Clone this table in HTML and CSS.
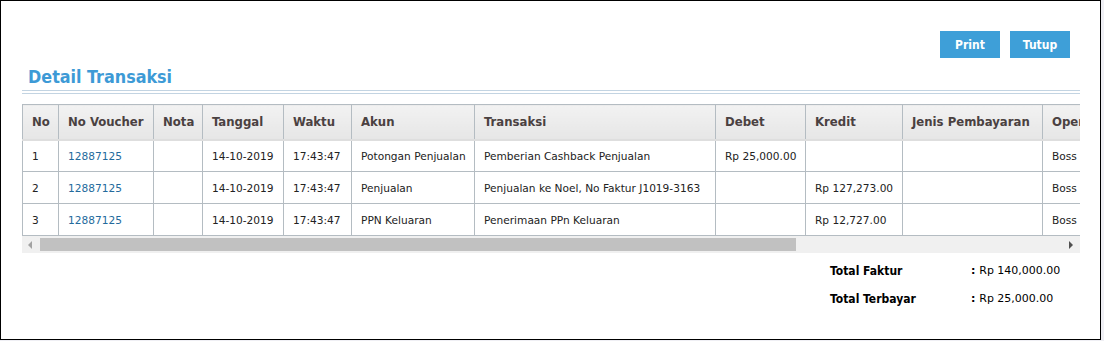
FILE: index.html
```html
<!DOCTYPE html>
<html lang="id">
<head>
    <meta charset="UTF-8">
    <meta name="viewport" content="width=device-width, initial-scale=1.0">
    <title>Detail Transaksi</title>
    <link rel="stylesheet" href="styles.css">
</head>
<body>
    <div class="dialog">
        <div class="toolbar">
            <button class="btn" type="button">Print</button>
            <button class="btn" type="button">Tutup</button>
        </div>

        <h2 class="title">Detail Transaksi</h2>
        <div class="rule"></div>

        <div class="grid-wrap">
            <table class="detail">
                <colgroup>
                    <col style="width:36px">
                    <col style="width:95px">
                    <col style="width:49px">
                    <col style="width:81px">
                    <col style="width:68px">
                    <col style="width:123px">
                    <col style="width:241px">
                    <col style="width:90px">
                    <col style="width:97px">
                    <col style="width:140px">
                    <col style="width:100px">
                </colgroup>
                <thead>
                    <tr>
                        <th>No</th>
                        <th>No Voucher</th>
                        <th>Nota</th>
                        <th>Tanggal</th>
                        <th>Waktu</th>
                        <th>Akun</th>
                        <th>Transaksi</th>
                        <th>Debet</th>
                        <th>Kredit</th>
                        <th>Jenis Pembayaran</th>
                        <th>Operator</th>
                    </tr>
                </thead>
                <tbody>
                    <tr>
                        <td>1</td>
                        <td><a href="#">12887125</a></td>
                        <td></td>
                        <td>14-10-2019</td>
                        <td>17:43:47</td>
                        <td>Potongan Penjualan</td>
                        <td>Pemberian Cashback Penjualan</td>
                        <td>Rp 25,000.00</td>
                        <td></td>
                        <td></td>
                        <td>Boss</td>
                    </tr>
                    <tr>
                        <td>2</td>
                        <td><a href="#">12887125</a></td>
                        <td></td>
                        <td>14-10-2019</td>
                        <td>17:43:47</td>
                        <td>Penjualan</td>
                        <td>Penjualan ke Noel, No Faktur J1019-3163</td>
                        <td></td>
                        <td>Rp 127,273.00</td>
                        <td></td>
                        <td>Boss</td>
                    </tr>
                    <tr>
                        <td>3</td>
                        <td><a href="#">12887125</a></td>
                        <td></td>
                        <td>14-10-2019</td>
                        <td>17:43:47</td>
                        <td>PPN Keluaran</td>
                        <td>Penerimaan PPn Keluaran</td>
                        <td></td>
                        <td>Rp 12,727.00</td>
                        <td></td>
                        <td>Boss</td>
                    </tr>
                </tbody>
            </table>
            <div class="hscroll">
                <span class="arrow arrow-left"></span>
                <span class="thumb"></span>
                <span class="arrow arrow-right"></span>
            </div>
        </div>

        <div class="totals">
            <span class="label">Total Faktur</span>
            <span class="value">: <span>Rp 140,000.00</span></span>
            <span class="label">Total Terbayar</span>
            <span class="value">: <span>Rp 25,000.00</span></span>
        </div>
    </div>
</body>
</html>
```

FILE: styles.css
```css
* {
    margin: 0;
    padding: 0;
    box-sizing: border-box;
}

body {
    font-family: 'DejaVu Sans', Verdana, sans-serif;
    font-size: 10.6px;
    background-color: #efeff4;
    color: #222;
}

.dialog {
    width: 1101px;
    height: 340px;
    background-color: #fff;
    border: 1px solid #000;
    padding: 30px 20px 0 21px;
}

.toolbar {
    display: flex;
    justify-content: flex-end;
    gap: 10px;
    padding-right: 10px;
}

.btn {
    width: 60px;
    height: 27px;
    border: none;
    background-color: #3e9fd8;
    color: #fff;
    font-family: 'DejaVu Sans Condensed', 'DejaVu Sans', sans-serif;
    font-weight: bold;
    font-size: 12px;
    cursor: pointer;
}

.title {
    margin-top: 9px;
    padding-left: 6px;
    font-family: 'DejaVu Sans Condensed', 'DejaVu Sans', sans-serif;
    font-size: 17.8px;
    line-height: 20px;
    color: #3d9ad6;
}

.rule {
    height: 4px;
    margin-top: 3px;
    border-top: 1px solid #c3d4e2;
    border-bottom: 1px solid #c3d4e2;
}

.grid-wrap {
    margin-top: 10px;
    overflow: hidden;
}

table.detail {
    width: 1120px;
    table-layout: fixed;
    border-collapse: collapse;
}

.detail th, .detail td {
    border: 1px solid #b4bcc2;
    padding: 0 9px;
    text-align: left;
    white-space: nowrap;
    overflow: hidden;
}

.detail th {
    height: 35px;
    background: linear-gradient(#f2f2f2, #e6e6e6);
    border-bottom: 2px solid #dedede;
    font-family: 'DejaVu Sans Condensed', 'DejaVu Sans', sans-serif;
    font-size: 13px;
    color: #4a4141;
}

.detail td {
    height: 32px;
    padding-top: 1px;
}

.detail td a {
    color: #236a9c;
    text-decoration: none;
}

/* horizontal scroller under the grid */
.hscroll {
    display: flex;
    align-items: center;
    height: 17px;
    background-color: #f0f0f0;
}

.thumb {
    width: 756px;
    height: 13px;
    margin-left: 8px;
    background-color: #c1c1c1;
}

.arrow {
    width: 0;
    height: 0;
    border-top: 4px solid transparent;
    border-bottom: 4px solid transparent;
}

.arrow-left {
    margin-left: 6px;
    border-right: 4px solid #a3a3a3;
}

.arrow-right {
    margin-left: auto;
    margin-right: 7px;
    border-left: 4px solid #505050;
}

.totals {
    display: grid;
    grid-template-columns: 141px auto;
    row-gap: 14px;
    width: 250px;
    margin: 11px 0 0 auto;
    line-height: 14px;
    color: #000;
}

.totals .label {
    font-family: 'DejaVu Sans Condensed', 'DejaVu Sans', sans-serif;
    font-size: 12px;
    font-weight: bold;
}

.totals .value {
    font-size: 11px;
    font-weight: bold;
}

.totals .value span {
    font-weight: normal;
}
```
